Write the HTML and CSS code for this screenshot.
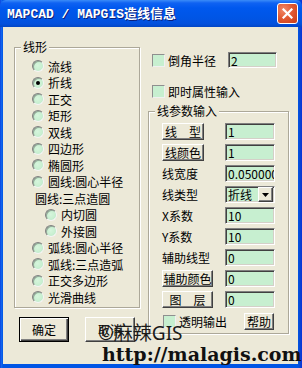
FILE: index.html
```html
<!DOCTYPE html>
<html lang="zh">
<head>
  <meta charset="UTF-8">
  <title>MAPCAD / MAPGIS造线信息</title>
  <link rel="stylesheet" href="styles.css">
</head>
<body>
  <div class="window">
    <div class="titlebar">
      <span class="title">MAPCAD / MAPGIS造线信息</span>
      <span class="close">
        <svg width="11" height="11" viewBox="0 0 11 11"><path d="M1.5 1.5 L9.5 9.5 M9.5 1.5 L1.5 9.5" stroke="#fff" stroke-width="2.2" stroke-linecap="square"/></svg>
      </span>
    </div>

    <div class="client">
      <div class="left">
        <div class="group shape-group">
          <span class="group-title">线形</span>
          <div class="radio-row"><span class="radio"></span>流线</div>
          <div class="radio-row"><span class="radio checked"></span>折线</div>
          <div class="radio-row"><span class="radio"></span>正交</div>
          <div class="radio-row"><span class="radio"></span>矩形</div>
          <div class="radio-row"><span class="radio"></span>双线</div>
          <div class="radio-row"><span class="radio"></span>四边形</div>
          <div class="radio-row"><span class="radio"></span>椭圆形</div>
          <div class="radio-row"><span class="radio"></span>圆线:圆心半径</div>
          <div class="radio-row sub-title">圆线:三点造圆</div>
          <div class="radio-row sub"><span class="radio"></span>内切圆</div>
          <div class="radio-row sub"><span class="radio"></span>外接圆</div>
          <div class="radio-row"><span class="radio"></span>弧线:圆心半径</div>
          <div class="radio-row"><span class="radio"></span>弧线:三点造弧</div>
          <div class="radio-row"><span class="radio"></span>正交多边形</div>
          <div class="radio-row"><span class="radio"></span>光滑曲线</div>
        </div>
        <div class="actions">
          <span class="btn btn-default">确定</span>
          <span class="btn">取消</span>
        </div>
      </div>

      <div class="right">
        <div class="check-row first">
          <span class="check"></span>
          <span class="check-label">倒角半径</span>
          <span class="field radius">2</span>
        </div>
        <div class="check-row">
          <span class="check"></span>
          <span class="check-label">即时属性输入</span>
        </div>

        <div class="group param-group">
          <span class="group-title">线参数输入</span>
          <div class="params">
            <span class="btn btn-small">线　型</span><span class="field">1</span>
            <span class="btn btn-small">线颜色</span><span class="field">1</span>
            <span class="param-label">线宽度</span><span class="field">0.050000</span>
            <span class="param-label">线类型</span>
            <span class="field combo">折线<span class="combo-btn"><svg width="7" height="4" viewBox="0 0 7 4"><path d="M0 0 H7 L3.5 4 Z" fill="#000"/></svg></span></span>
            <span class="param-label">X系数</span><span class="field">10</span>
            <span class="param-label">Y系数</span><span class="field">10</span>
            <span class="param-label">辅助线型</span><span class="field">0</span>
            <span class="btn btn-wide">辅助颜色</span><span class="field">0</span>
            <span class="btn btn-wide">图　层</span><span class="field">0</span>
          </div>
          <div class="param-foot">
            <span class="check"></span>
            <span class="check-label">透明输出</span>
            <span class="btn btn-help">帮助</span>
          </div>
        </div>
      </div>

      <div class="watermark">
        <div class="wm-name">©麻辣GIS</div>
        <div class="wm-url">http://malagis.com</div>
      </div>
    </div>
  </div>
</body>
</html>
```

FILE: styles.css
```css
body {
  margin: 0;
  font-family: "Noto Sans CJK SC", "Liberation Sans", sans-serif;
  font-size: 12px;
  color: #000;
  background-color: #fff;
}
.window {
  width: 302px;
  height: 368px;
  box-sizing: border-box;
  padding: 0 4px 4px 3px;
  background: linear-gradient(to right, #0831d9 0, #166aee 1px, #0055e5 3px, #0055e5 298px, #0a47d0 300px, #0831d9 302px);
  display: flex;
  flex-direction: column;
}
.titlebar {
  height: 27px;
  margin: 0 -4px 0 -3px;
  padding: 0 4px 0 7px;
  display: flex;
  align-items: center;
  justify-content: space-between;
  background: linear-gradient(#3b8cf8 0, #0f62f2 3px, #0058ee 8px, #0055e5 18px, #0350dc 24px, #0246c4 27px);
  border-radius: 6px 6px 0 0;
}
.title {
  color: #fff;
  font-family: "Liberation Mono", "Noto Sans CJK SC", monospace;
  font-weight: bold;
  font-size: 13px;
  text-shadow: 1px 1px 0 #0a1e7a;
  margin-top: -2px;
}
.close {
  width: 19px;
  height: 19px;
  margin-top: -1px;
  border: 1px solid #fff;
  border-radius: 3px;
  background: radial-gradient(circle at 30% 30%, #f08a6a 0, #e25a33 45%, #c83c16 100%);
  display: flex;
  align-items: center;
  justify-content: center;
}
.client {
  flex: 1;
  position: relative;
  background-color: #ece9d8;
  display: flex;
  padding-left: 11px;
}
.group {
  position: relative;
  box-sizing: border-box;
  border: 1px solid #aca899;
  box-shadow: inset 1px 1px 0 #fff, 1px 1px 0 #fff;
}
.group-title {
  position: absolute;
  top: -9px;
  left: 6px;
  padding: 0 2px;
  line-height: 16px;
  background-color: #ece9d8;
}
.left {
  width: 126px;
}
.shape-group {
  margin-top: 20px;
  height: 261px;
  padding-top: 10px;
}
.radio-row {
  height: 16.5px;
  display: flex;
  align-items: center;
  padding-left: 17px;
  white-space: nowrap;
}
.radio-row.sub {
  padding-left: 30px;
}
.radio-row.sub-title {
  padding-left: 20px;
}
.radio {
  position: relative;
  box-sizing: border-box;
  width: 12px;
  height: 12px;
  margin-right: 4px;
  flex-shrink: 0;
  border-radius: 50%;
  border: 1px solid;
  border-color: #808080 #f4f4f4 #f4f4f4 #808080;
  background: radial-gradient(circle at 45% 45%, #d6f5dc 0, #c7efd0 60%, #b4dcbd 100%);
  box-shadow: inset 1px 1px 0 rgba(64, 64, 64, 0.4);
}
.radio.checked::after {
  content: "";
  position: absolute;
  left: 3px;
  top: 3px;
  width: 4px;
  height: 4px;
  border-radius: 50%;
  background-color: #000;
}
.actions {
  display: flex;
  gap: 16px;
  margin-top: 9px;
  padding-left: 5px;
}
.btn {
  box-sizing: border-box;
  display: flex;
  align-items: center;
  justify-content: center;
  background-color: #ece9d8;
  border: 1px solid;
  border-color: #fff #404040 #404040 #fff;
  box-shadow: inset -1px -1px 0 #808080;
  white-space: nowrap;
}
.actions .btn {
  width: 50px;
  height: 25px;
}
.btn-default {
  border-color: #000;
  box-shadow: inset 1px 1px 0 #fff, inset -1px -1px 0 #404040, inset -2px -2px 0 #808080;
}
.right {
  width: 141px;
  margin-left: 8px;
  padding-top: 25px;
}
.check-row {
  height: 16px;
  display: flex;
  align-items: center;
  padding-left: 4px;
  margin-top: 15px;
}
.check-row.first {
  margin-top: 0;
}
.check {
  box-sizing: border-box;
  width: 13px;
  height: 13px;
  flex-shrink: 0;
  border: 1px solid;
  border-color: #8f8f8f #f0f0f0 #f0f0f0 #8f8f8f;
  background-color: #c7efd0;
}
.check-label {
  margin-left: 3px;
  white-space: nowrap;
}
.field {
  box-sizing: border-box;
  height: 17px;
  width: 50px;
  padding-left: 2px;
  display: flex;
  align-items: center;
  overflow: hidden;
  white-space: nowrap;
  background-color: #c7efd0;
  border: 1px solid;
  border-color: #808080 #fff #fff #808080;
  box-shadow: inset 1px 1px 0 #404040, inset -1px -1px 0 #d4d0c8;
}
.field.radius {
  height: 16px;
  width: 49px;
  margin-left: 12px;
}
.param-group {
  margin-top: 12px;
  height: 223px;
  padding: 11px 0 0 13px;
}
.params {
  display: grid;
  grid-template-columns: 63px 50px;
  grid-auto-rows: 17px;
  row-gap: 4px;
  align-items: center;
}
.btn-small {
  width: 42px;
  height: 17px;
}
.btn-wide {
  width: 51px;
  height: 17px;
}
.param-label {
  white-space: nowrap;
}
.combo {
  justify-content: space-between;
  padding-right: 1px;
}
.combo-btn {
  box-sizing: border-box;
  width: 15px;
  height: 15px;
  display: flex;
  align-items: center;
  justify-content: center;
  background-color: #ece9d8;
  border: 1px solid;
  border-color: #fff #404040 #404040 #fff;
  box-shadow: inset -1px -1px 0 #808080;
}
.param-foot {
  display: flex;
  align-items: center;
  height: 17px;
  margin-top: 5px;
  padding-left: 1px;
}
.btn-help {
  width: 30px;
  height: 17px;
  margin-left: auto;
  margin-right: 14px;
}
.watermark {
  position: absolute;
  left: 95px;
  top: 294px;
  pointer-events: none;
}
.wm-name {
  font-family: "Noto Sans", "Noto Sans CJK SC", sans-serif;
  font-size: 19px;
  line-height: 24px;
  color: #1a1a1a;
}
.wm-url {
  margin: -1px 0 0 4px;
  font-family: "DejaVu Serif", serif;
  font-weight: bold;
  font-size: 19px;
  line-height: 20px;
  color: #111;
}
```
